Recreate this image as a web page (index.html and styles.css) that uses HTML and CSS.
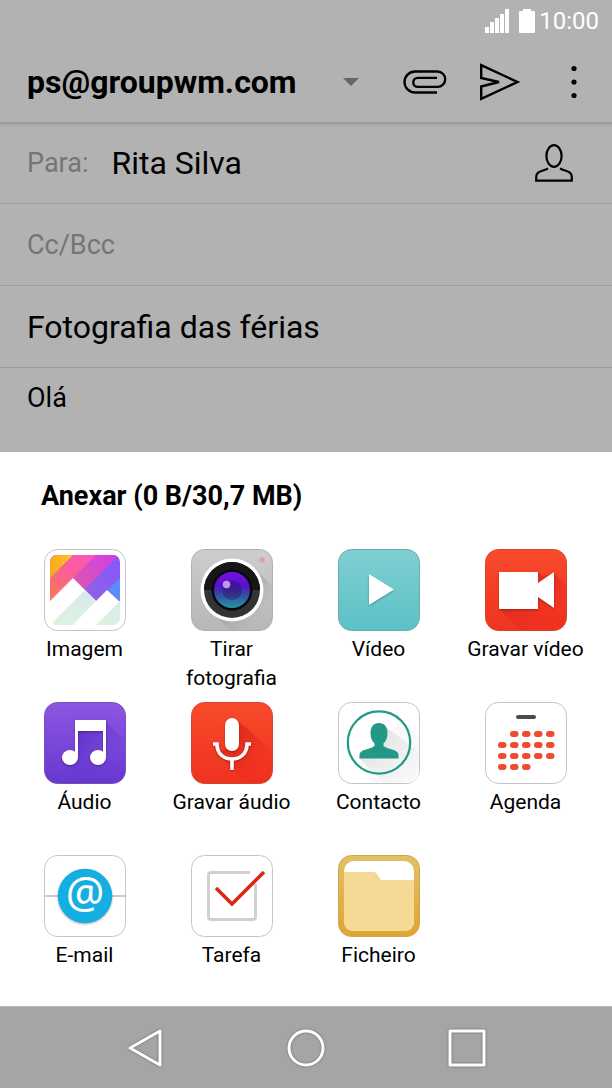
FILE: index.html
```html
<!DOCTYPE html>
<html lang="pt">
<head>
    <meta charset="UTF-8">
    <meta name="viewport" content="width=device-width, initial-scale=1.0">
    <title>Anexar</title>
    <link rel="stylesheet" href="styles.css">
</head>
<body>
    <div class="compose">
        <div class="status-bar">
            <svg class="signal" width="24" height="24" viewBox="0 0 24 24" fill="#fff">
                <path d="M0 18h4v6H0zM5 13h4v11H5zM10 9h4v15h-4zM15 5h4v19h-4zM20 0h4v24h-4z"/>
            </svg>
            <svg width="16" height="24" viewBox="0 0 16 24" fill="#fff">
                <path d="M4 0h8v2h3a1 1 0 0 1 1 1v20a1 1 0 0 1-1 1H1a1 1 0 0 1-1-1V3a1 1 0 0 1 1-1h3z"/>
            </svg>
            <span class="clock">10:00</span>
        </div>

        <header class="toolbar">
            <label class="account">
                <select class="account-select" aria-label="Conta">
                    <option>ps@groupwm.com</option>
                </select>
                <svg class="account-arrow" width="16" height="8" viewBox="0 0 16 8"><path d="M0 0h16L8 8z" fill="#666"/></svg>
            </label>
            <div class="toolbar-actions">
                <button class="icon-button" aria-label="Anexar">
                    <svg width="44" height="24" viewBox="0 0 44 24" fill="none" stroke="#000" stroke-width="2.4">
                        <path d="M34 22.500H12a10.500 10.500 0 0 1 0-21h22.500a7.700 7.700 0 0 1 0 15.400H14.800a4.500 4.500 0 0 1 0-9H34"/>
                    </svg>
                </button>
                <button class="icon-button" aria-label="Enviar">
                    <svg width="42" height="38" viewBox="0 0 42 38" fill="none" stroke="#000" stroke-width="2.4">
                        <path d="M2.2 2.200 38.500 19 2.200 35.800V23.500L20 19 2.200 15z"/>
                    </svg>
                </button>
                <button class="icon-button" aria-label="Mais opções">
                    <svg width="42" height="34" viewBox="0 0 42 34">
                        <circle cx="21" cy="3.5" r="2.6"/><circle cx="21" cy="17" r="2.6"/><circle cx="21" cy="30.5" r="2.6"/>
                    </svg>
                </button>
            </div>
        </header>

        <div class="field">
            <label class="field-label" for="to">Para:</label>
            <input class="field-input" id="to" type="text" value="Rita Silva">
            <button class="icon-button" aria-label="Contactos">
                <svg width="38" height="38" viewBox="0 0 38 38" fill="none" stroke="#000" stroke-width="2.2">
                    <ellipse cx="19" cy="12" rx="7.6" ry="10.8"/>
                    <path d="M13 24.500C7 27.500 1.200 27 1.200 33v3.700h35.600V33c0-6-5.800-5.500-11.800-8.500"/>
                </svg>
            </button>
        </div>
        <div class="field">
            <input class="field-input field-cc" type="text" placeholder="Cc/Bcc" aria-label="Cc/Bcc">
        </div>
        <div class="field">
            <input class="field-input" type="text" value="Fotografia das férias" aria-label="Assunto">
        </div>
        <textarea class="message" rows="1" aria-label="Mensagem">Olá</textarea>
    </div>

    <section class="sheet">
        <h1 class="sheet-title">Anexar (0 B/30,7 MB)</h1>
        <div class="attach-grid">
            <button class="attach">
                <svg class="attach-icon" viewBox="0 0 82 82">
                    <defs>
                        <clipPath id="photo"><rect x="6" y="6" width="70" height="70" rx="7"/></clipPath>
                        <linearGradient id="orange" x1="0" y1="0" x2="1" y2="0"><stop offset="0" stop-color="#fba81c"/><stop offset="1" stop-color="#fcc432"/></linearGradient>
                        <linearGradient id="pink" gradientUnits="userSpaceOnUse" x1="6" y1="50" x2="50" y2="6"><stop offset="0" stop-color="#f57d52"/><stop offset=".5" stop-color="#fa5f95"/><stop offset="1" stop-color="#fb55ba"/></linearGradient>
                        <linearGradient id="magenta" gradientUnits="userSpaceOnUse" x1="28" y1="32" x2="65" y2="6"><stop offset="0" stop-color="#dd57b0"/><stop offset="1" stop-color="#cf42e0"/></linearGradient>
                        <linearGradient id="purple" gradientUnits="userSpaceOnUse" x1="45" y1="45" x2="76" y2="10"><stop offset="0" stop-color="#9160e8"/><stop offset="1" stop-color="#8557fb"/></linearGradient>
                        <linearGradient id="mint" x1="0" y1="0" x2="0" y2="1"><stop offset="0" stop-color="#d9e8f0"/><stop offset="1" stop-color="#dcf3e0"/></linearGradient>
                    </defs>
                    <rect class="plate" x=".5" y=".5" width="81" height="81" rx="13"/>
                    <g clip-path="url(#photo)">
                        <path d="M6 6h70v46H6z" fill="url(#purple)"/>
                        <path d="M6 6h69L35 46H6z" fill="url(#magenta)"/>
                        <path d="M6 6h46L6 52z" fill="url(#pink)"/>
                        <path d="M6 6h23L6 29z" fill="url(#orange)"/>
                        <path d="M76 29v24L64 41z" fill="#588dff"/>
                        <path d="M6 52 29 29l23 23 11-11 13 12v23H6z" fill="#fff"/>
                        <path d="M41 41l11 11-23 24H6z" fill="url(#mint)"/>
                        <path d="M76 52v24H52z" fill="url(#mint)"/>
                    </g>
                </svg>
                <span>Imagem</span>
            </button>
            <button class="attach">
                <svg class="attach-icon" viewBox="0 0 82 82">
                    <defs>
                        <linearGradient id="steel" x1="0" y1="0" x2="0" y2="1"><stop offset="0" stop-color="#cdcdcd"/><stop offset="1" stop-color="#b7b7b7"/></linearGradient>
                        <linearGradient id="lens" x1="0" y1="0" x2="0" y2="1"><stop offset="0" stop-color="#7b0de4"/><stop offset=".4" stop-color="#5512c8"/><stop offset=".55" stop-color="#3b3aa5"/><stop offset="1" stop-color="#2298a4"/></linearGradient>
                        <linearGradient id="lens-shade" x1="0" y1="0" x2="1" y2="1"><stop offset=".5" stop-color="#888" stop-opacity=".4"/><stop offset=".8" stop-color="#aaa" stop-opacity="0"/></linearGradient>
                    </defs>
                    <rect x=".5" y=".5" width="81" height="81" rx="13" fill="url(#steel)" stroke="#b0b0b0"/>
                    <path d="M61 17 81 37v32q0 12-12 12H39L18 61z" fill="url(#lens-shade)"/>
                    <circle cx="71" cy="11" r="2.7" fill="#dfa0a0"/>
                    <circle cx="41" cy="41" r="31.5" fill="#fff"/>
                    <circle cx="41" cy="41" r="28" fill="#333"/>
                    <path d="M13 41a28 28 0 0 1 56 0z" fill="#161616"/>
                    <circle cx="41" cy="41" r="20.5" fill="#08080c"/>
                    <circle cx="41" cy="41" r="18" fill="url(#lens)"/>
                    <circle cx="41" cy="41" r="10" fill="#25155f" opacity=".4"/>
                    <circle cx="35.5" cy="35.5" r="3.8" fill="#b99be8"/>
                </svg>
                <span>Tirar fotografia</span>
            </button>
            <button class="attach">
                <svg class="attach-icon" viewBox="0 0 82 82">
                    <defs><linearGradient id="teal" x1="0" y1="0" x2="0" y2="1"><stop offset="0" stop-color="#80cfd2"/><stop offset="1" stop-color="#5bc1c6"/></linearGradient></defs>
                    <rect x=".5" y=".5" width="81" height="81" rx="13" fill="url(#teal)" stroke="#63aeb2"/>
                    <path class="raised" d="M31 25v31l25-15.500z" fill="#fff"/>
                </svg>
                <span>Vídeo</span>
            </button>
            <button class="attach">
                <svg class="attach-icon" viewBox="0 0 82 82">
                    <defs>
                        <linearGradient id="red" x1="0" y1="0" x2="0" y2="1"><stop offset="0" stop-color="#f84a2b"/><stop offset="1" stop-color="#ef3320"/></linearGradient>
                        <linearGradient id="red-shade" x1="0" y1="0" x2="1" y2="1"><stop offset=".3" stop-color="#d8241a" stop-opacity=".7"/><stop offset=".75" stop-color="#ef2a1a" stop-opacity=".3"/></linearGradient>
                    </defs>
                    <rect x=".5" y=".5" width="81" height="81" rx="13" fill="url(#red)" stroke="#d54530"/>
                    <path d="M14 60l21 21h34q12 0 12-12V36L69 24 57 27l-4-4z" fill="url(#red-shade)"/>
                    <path class="raised" d="M14 23h39v11l16-11v36L53 48v12H14z" fill="#fff"/>
                </svg>
                <span>Gravar vídeo</span>
            </button>
            <button class="attach">
                <svg class="attach-icon" viewBox="0 0 82 82">
                    <defs>
                        <linearGradient id="violet" x1="0" y1="0" x2="0" y2="1"><stop offset="0" stop-color="#8d56e2"/><stop offset="1" stop-color="#6738cf"/></linearGradient>
                        <linearGradient id="violet-shade" x1="0" y1="0" x2="1" y2="1"><stop offset=".2" stop-color="#542bc0" stop-opacity=".7"/><stop offset=".65" stop-color="#6738d4" stop-opacity=".1"/></linearGradient>
                    </defs>
                    <rect x=".5" y=".5" width="81" height="81" rx="13" fill="url(#violet)" stroke="#7451bc"/>
                    <path d="M62 20 81 39v30q0 12-12 12H39L20 61l14-7V28h24z" fill="url(#violet-shade)"/>
                    <g class="raised" fill="#fff">
                        <path d="M31 18h31v38h-3V29H34v27h-3z"/>
                        <ellipse cx="26" cy="55.5" rx="8" ry="7.5"/><ellipse cx="54" cy="55.5" rx="8" ry="7.5"/>
                    </g>
                </svg>
                <span>Áudio</span>
            </button>
            <button class="attach">
                <svg class="attach-icon" viewBox="0 0 82 82">
                    <rect x=".5" y=".5" width="81" height="81" rx="13" fill="url(#red)" stroke="#d54530"/>
                    <path d="M46 18 81 49v20q0 12-12 12H55L41 67 27 48h20z" fill="url(#red-shade)"/>
                    <g class="raised">
                        <rect x="34" y="16" width="14" height="33" rx="7" fill="#fff"/>
                        <path d="M22 42h4c0 10 7 15 15 15s15-5 15-15h4M41 57v11" fill="none" stroke="#fff" stroke-width="3.6"/>
                    </g>
                </svg>
                <span>Gravar áudio</span>
            </button>
            <button class="attach">
                <svg class="attach-icon" viewBox="0 0 82 82">
                    <defs><linearGradient id="grey-shade" x1="0" y1="0" x2="1" y2="1"><stop offset=".3" stop-color="#dadada"/><stop offset=".9" stop-color="#fff"/></linearGradient></defs>
                    <rect class="plate" x=".5" y=".5" width="81" height="81" rx="13"/>
                    <path d="M49 26 81 50v19q0 12-12 12H46L21 56l20-10z" fill="url(#grey-shade)" opacity=".7"/>
                    <path d="M64 18 81 34v34q0 13-13 13H37L18 63z" fill="#ececec" opacity=".3"/>
                    <circle cx="41" cy="40.5" r="31.2" fill="none" stroke="#239887" stroke-width="2.2"/>
                    <path d="M41 21c5.500 0 8.500 4 8.500 10 0 5-1.500 8-4 10.500v2.500c5 4 15 3 15 9v3.500H21.500V53c0-6 10-5 15-9v-2.500c-2.500-2.500-4-5.500-4-10.500 0-6 3-10 8.500-10z" fill="#239887"/>
                </svg>
                <span>Contacto</span>
            </button>
            <button class="attach">
                <svg class="attach-icon" viewBox="0 0 82 82">
                    <rect class="plate" x=".5" y=".5" width="81" height="81" rx="13"/>
                    <rect x="31" y="13" width="20" height="4" rx="2" fill="#4b4b4b"/>
                    <!-- one dot per day, a row per week -->
                    <g fill="#ee4b31">
                        <rect x="25" y="29" width="8.5" height="6" rx="3"/><rect x="37" y="29" width="8.5" height="6" rx="3"/><rect x="49" y="29" width="8.5" height="6" rx="3"/><rect x="61" y="29" width="8.5" height="6" rx="3"/>
                        <rect x="13" y="40" width="8.5" height="6" rx="3"/><rect x="25" y="40" width="8.5" height="6" rx="3"/><rect x="37" y="40" width="8.5" height="6" rx="3"/><rect x="49" y="40" width="8.5" height="6" rx="3"/><rect x="61" y="40" width="8.5" height="6" rx="3"/>
                        <rect x="13" y="51" width="8.5" height="6" rx="3"/><rect x="25" y="51" width="8.5" height="6" rx="3"/><rect x="37" y="51" width="8.5" height="6" rx="3"/><rect x="49" y="51" width="8.5" height="6" rx="3"/><rect x="61" y="51" width="8.5" height="6" rx="3"/>
                        <rect x="13" y="62" width="8.5" height="6" rx="3"/><rect x="25" y="62" width="8.5" height="6" rx="3"/><rect x="37" y="62" width="8.5" height="6" rx="3"/>
                    </g>
                </svg>
                <span>Agenda</span>
            </button>
            <button class="attach">
                <svg class="attach-icon" viewBox="0 0 82 82">
                    <rect class="plate" x=".5" y=".5" width="81" height="81" rx="13"/>
                    <path d="M1 41h80" stroke="#ccc" stroke-width="2"/>
                    <circle class="raised" cx="41" cy="41" r="27.2" fill="#14aee2"/>
                    <text class="at-sign" x="41" y="53" text-anchor="middle">@</text>
                </svg>
                <span>E-mail</span>
            </button>
            <button class="attach">
                <svg class="attach-icon" viewBox="0 0 82 82">
                    <rect class="plate" x=".5" y=".5" width="81" height="81" rx="13"/>
                    <path d="M59 17.500H20q-2.500 0-2.500 2.500v42q0 2.500 2.500 2.500h42q2.500 0 2.500-2.500V29" fill="none" stroke="#d0d0d0" stroke-width="3"/>
                    <path d="M25 33l16 16 32-32" fill="none" stroke="#dc2a10" stroke-width="3.6"/>
                </svg>
                <span>Tarefa</span>
            </button>
            <button class="attach">
                <svg class="attach-icon" viewBox="0 0 82 82">
                    <defs><linearGradient id="gold" x1="0" y1="0" x2="0" y2="1"><stop offset="0" stop-color="#e2c165"/><stop offset="1" stop-color="#dfa532"/></linearGradient></defs>
                    <rect x=".5" y=".5" width="81" height="81" rx="13" fill="url(#gold)" stroke="#d0a548"/>
                    <rect x="6" y="6" width="70" height="70" rx="10" fill="#fff"/>
                    <path d="M6 17h30q1.500 0 2.500 1.500L43 25h33v41q0 10-10 10H16Q6 76 6 66z" fill="#f5da95"/>
                </svg>
                <span>Ficheiro</span>
            </button>
        </div>
    </section>

    <nav class="nav-bar">
        <button class="icon-button" aria-label="Retroceder">
            <svg class="nav-icon" viewBox="0 0 40 40"><path d="M35 3v34L5 20z"/></svg>
        </button>
        <button class="icon-button" aria-label="Início">
            <svg class="nav-icon" viewBox="0 0 40 40"><circle cx="20" cy="20" r="17"/></svg>
        </button>
        <button class="icon-button" aria-label="Recentes">
            <svg class="nav-icon" viewBox="0 0 40 40"><path d="M3 3h34v34H3z"/></svg>
        </button>
    </nav>
</body>
</html>
```
FILE: styles.css
```css
* {
    margin: 0;
    padding: 0;
    box-sizing: border-box;
}

body {
    min-height: 100vh;
    display: flex;
    flex-direction: column;
    font-family: Roboto, sans-serif;
    background: #fff;
    color: #000;
}

button,
input,
select,
textarea {
    font: inherit;
    color: inherit;
    background: none;
    border: none;
    outline: none;
}

svg {
    display: block;
}

.compose {
    flex: 1;
    display: flex;
    flex-direction: column;
    background: #b2b2b2;
}

.status-bar {
    height: 42px;
    padding: 0 13px;
    display: flex;
    justify-content: flex-end;
    align-items: center;
    color: #fff;
}

.signal {
    margin-right: 10px;
}

.clock {
    margin-left: 4px;
    font-size: 24px;
}

.toolbar {
    height: 80px;
    padding: 0 17px 0 27px;
    display: flex;
    justify-content: space-between;
    align-items: center;
    box-shadow: 0 2px 0 #9c9c9c, 0 3px 2px rgba(0,0,0,0.1);
}

.account {
    display: flex;
    align-items: center;
    gap: 46px;
}

.account-select {
    appearance: none;
    font-size: 32px;
    font-weight: bold;
}

.toolbar-actions {
    display: flex;
    align-items: center;
    gap: 32px;
}

.icon-button {
    display: flex;
    align-items: center;
    cursor: pointer;
}

.field {
    height: 82px;
    padding: 0 39px 0 27px;
    display: flex;
    align-items: center;
    gap: 23px;
    border-bottom: 1px solid #9c9c9c;
}

.field-label {
    font-size: 27px;
    color: #757575;
}

.field-input {
    flex: 1;
    min-width: 0;
    font-size: 32px;
}

.field-cc {
    font-size: 27px;
}

.field-cc::placeholder {
    color: #757575;
}

.message {
    flex: 1;
    padding: 14px 27px;
    font-size: 27px;
    line-height: 32px;
    resize: none;
}

.sheet {
    padding: 28px 13px 7px 11px;
    background: #fff;
}

.sheet-title {
    margin: 0 30px 37px;
    font-size: 27px;
    line-height: 32px;
}

.attach-grid {
    display: grid;
    grid-template-columns: repeat(4, 1fr);
    grid-auto-rows: minmax(144px, auto);
    gap: 9px 0;
}

.attach {
    padding: 0 8px;
    display: flex;
    flex-direction: column;
    align-items: center;
    gap: 4px;
    font-size: 21px;
    line-height: 29px;
    cursor: pointer;
}

.attach-icon {
    width: 82px;
    height: 82px;
}

.plate {
    fill: #fff;
    stroke: #c4c4c8;
}

.raised {
    filter: drop-shadow(0 1px 1px rgba(0,0,0,0.3));
}

.at-sign {
    font-family: "Noto Sans", sans-serif;
    font-size: 43px;
    fill: #fff;
}

.nav-bar {
    height: 82px;
    padding: 0 125px;
    display: flex;
    justify-content: space-between;
    align-items: center;
    background: #a4a5a6;
    border-top: 1px solid #b8b8b8;
}

.nav-icon {
    width: 40px;
    height: 40px;
    fill: none;
    stroke: #fff;
    stroke-width: 3;
    stroke-linejoin: round;
    filter: drop-shadow(0 0 1px #666);
}
```
